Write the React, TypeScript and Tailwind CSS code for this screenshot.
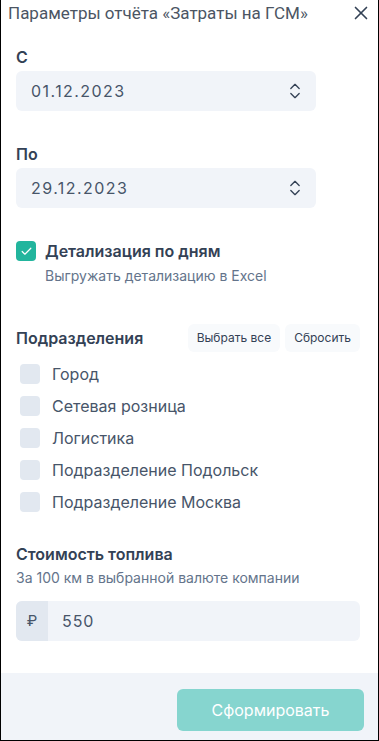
import React from "react";
import { X, ChevronsUpDown, Check } from "lucide-react";

const depts = ["Город", "Сетевая розница", "Логистика", "Подразделение Подольск", "Подразделение Москва"];

function DateField({ value }: { value: string }) {
  return (
    <div className="w-[300px] h-[40px] rounded-md bg-[#f1f4f9] flex items-center justify-between pl-[15px] pr-[11px]">
      <span className="text-[16px] tracking-[0.09em] text-[#475569]">{value}</span>
      <ChevronsUpDown size={20} strokeWidth={1.6} className="text-[#334155]" />
    </div>
  );
}

export default function App() {
  return (
    <div
      className="w-[379px] h-[741px] bg-white border-l border-r border-b border-black flex flex-col overflow-hidden"
      style={{ fontFamily: "Inter, 'Noto Sans', sans-serif" }}
    >
      <div className="flex items-center justify-between pl-[7px] pr-[6px] h-[24px] pt-[1px]">
        <span className="text-[17px] leading-[20px] text-[#4b5563]" style={{ fontFamily: "Roboto, 'Liberation Sans', sans-serif" }}>
          Параметры отчёта «Затраты на ГСМ»
        </span>
        <X size={22} strokeWidth={1.8} className="text-[#334155]" />
      </div>

      <div className="flex-1 flex flex-col pl-[15px] pr-[18px] pt-[23px]">
        <div className="text-[16px] leading-[20px] font-semibold text-[#334155] mb-[4px]">С</div>
        <DateField value="01.12.2023" />

        <div className="text-[16px] leading-[20px] font-semibold text-[#334155] mt-[33px] mb-[4px]">По</div>
        <DateField value="29.12.2023" />

        <div className="mt-[33px] flex items-center gap-[9px]">
          <div className="w-[20px] h-[20px] rounded-[4px] bg-[#22b59d] flex items-center justify-center">
            <Check size={13} strokeWidth={2.2} className="text-white" />
          </div>
          <span className="text-[16px] leading-[20px] font-semibold text-[#334155]">Детализация по дням</span>
        </div>
        <div className="pl-[29px] mt-[6px] text-[14px] leading-[18px] text-[#64748b]">Выгружать детализацию в Excel</div>

        <div className="mt-[39px] flex items-center justify-between">
          <span className="text-[16px] leading-[20px] font-semibold text-[#334155]">Подразделения</span>
          <div className="flex gap-[5px]">
            <button className="h-[28px] px-[9px] rounded-md bg-[#f8fafc] text-[12px] text-[#334155]">Выбрать все</button>
            <button className="h-[28px] px-[9px] rounded-md bg-[#f8fafc] text-[12px] text-[#334155]">Сбросить</button>
          </div>
        </div>

        <div className="mt-[12px] flex flex-col gap-[12px] pl-[4px]">
          {depts.map((d) => (
            <div key={d} className="flex items-center gap-[12px] h-[20px]">
              <div className="w-[20px] h-[20px] rounded-[4px] bg-[#e2e8f0]" />
              <span className="text-[16px] leading-[20px] text-[#475569]">{d}</span>
            </div>
          ))}
        </div>

        <div className="mt-[32px] text-[16px] leading-[20px] font-semibold text-[#334155]">Стоимость топлива</div>
        <div className="mt-[5px] text-[14px] leading-[18px] text-[#64748b]">За 100 км в выбранной валюте компании</div>

        <div className="mt-[14px] h-[40px] w-[344px] rounded-md bg-[#f1f4f9] flex overflow-hidden">
          <div className="w-[32px] h-full bg-[#e2e8f0] flex items-center justify-center text-[15px] text-[#475569]">₽</div>
          <div className="flex items-center pl-[14px] text-[16px] tracking-[0.06em] text-[#475569]">550</div>
        </div>
      </div>

      <div className="h-[67px] bg-[#f1f4f9] flex justify-end items-start pt-[16px] pr-[14px]">
        <button className="w-[187px] h-[42px] rounded-md bg-[#86d5cf] text-white text-[16px]">Сформировать</button>
      </div>
    </div>
  );
}
